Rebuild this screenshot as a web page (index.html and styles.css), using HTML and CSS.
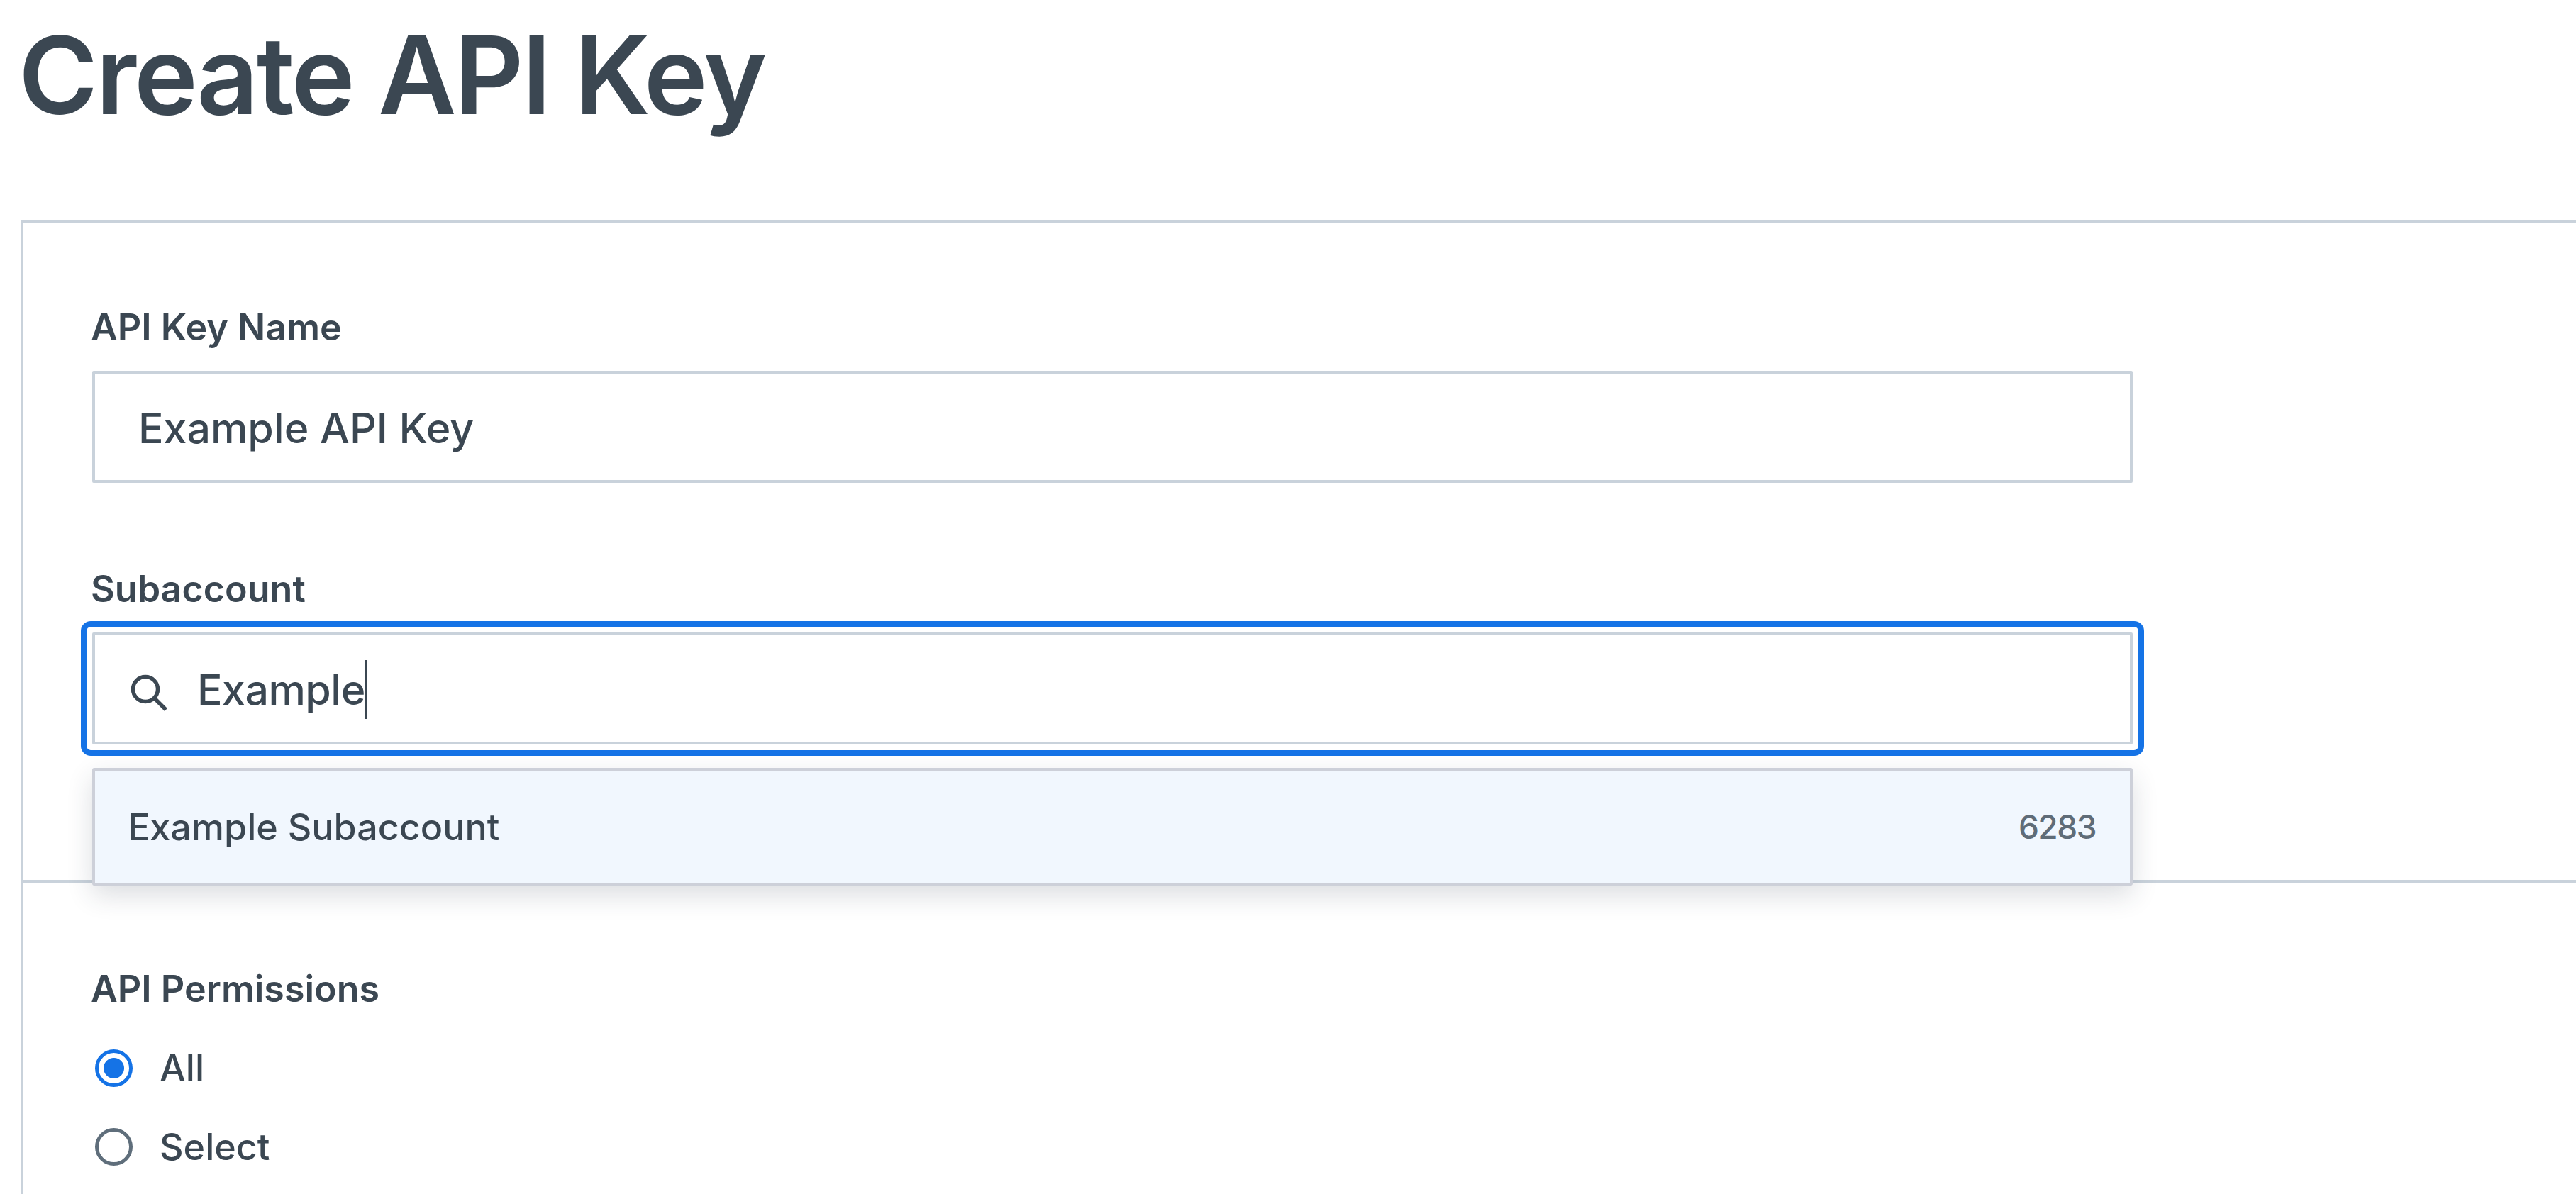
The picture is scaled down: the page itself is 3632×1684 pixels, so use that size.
FILE: index.html
```html
<!DOCTYPE html>
<html lang="en">

<head>
    <meta charset="utf-8">
    <title>Create API Key</title>
    <link rel="stylesheet" href="styles.css">
</head>

<body>
    <h1>Create API Key</h1>

    <div class="card">
        <div class="section section-top">
            <div class="field">
                <div class="field-label">API Key Name</div>
                <div class="text-box plain-box">Example API Key</div>
            </div>

            <div class="field field-search">
                <div class="field-label">Subaccount</div>
                <div class="focus-ring">
                    <div class="text-box search-box">
                        <svg class="search-icon" viewBox="0 0 52 52" width="52" height="52" aria-hidden="true">
                            <circle cx="21" cy="21" r="17.5" fill="none" stroke="#3c4853" stroke-width="5.5" />
                            <path d="M33.5 33.5 L50 50" fill="none" stroke="#3c4853" stroke-width="5.5" />
                        </svg>
                        <span class="search-text">Example</span><span class="caret"></span>
                    </div>
                </div>
                <!-- results list hangs over the divider below -->
                <div class="results">
                    <span>Example Subaccount</span>
                    <span class="result-id">6283</span>
                </div>
            </div>
        </div>

        <div class="section section-permissions">
            <div class="field-label">API Permissions</div>
            <label class="radio-row"><input type="radio" name="permissions" checked> All</label>
            <label class="radio-row"><input type="radio" name="permissions"> Select</label>
        </div>
    </div>
</body>

</html>
```

FILE: styles.css
```css
html,
body {
    height: 100%;
}

body {
    margin: 0;
    padding-left: 29px;
    box-sizing: border-box;
    overflow: hidden;
    background: #fff;
    color: #3b4752;
    font-family: Inter, "Liberation Sans", sans-serif;
}

h1 {
    margin: 0 0 0 -3px;
    height: 310px;
    padding-top: 14px;
    box-sizing: border-box;
    font-size: 152px;
    font-weight: 600;
    letter-spacing: -3px;
    line-height: 184px;
}

.card {
    height: 1374px;
    border-top: 4px solid #c9d2db;
    border-left: 4px solid #c9d2db;
}

.section {
    padding-left: 97px;
}

.section-top {
    height: 931px;
    padding-top: 118px;
    box-sizing: border-box;
    border-bottom: 4px solid #c9d2db;
}

.field {
    width: 2877px;
    margin-bottom: 120px;
}

.field-search {
    position: relative;
}

.field-label {
    height: 60px;
    margin-bottom: 31px;
    margin-left: -2px;
    font-size: 52px;
    font-weight: 600;
    line-height: 60px;
}

.text-box {
    display: flex;
    align-items: center;
    box-sizing: border-box;
    height: 158px;
    padding-top: 3px;
    border: 4px solid #c9d2db;
    border-radius: 2px;
    background: #fff;
    font-size: 59px;
    font-weight: 450;
}

.plain-box {
    padding-left: 61px;
}

.search-box {
    padding-left: 50px;
}

.search-icon {
    flex: none;
    margin-right: 42px;
    margin-top: 8px;
}

.search-text {
    letter-spacing: -0.5px;
}

.caret {
    width: 3px;
    height: 83px;
    background: #3b4752;
}

.focus-ring {
    margin: -16px;
    padding: 8px;
    border: 8px solid #1573e6;
    border-radius: 14px;
}

.results {
    position: absolute;
    top: 100%;
    left: 0;
    right: 0;
    display: flex;
    align-items: center;
    justify-content: space-between;
    box-sizing: border-box;
    height: 166px;
    margin-top: 17px;
    padding: 0 48px 0 46px;
    border: 4px solid #cdd0d9;
    border-radius: 3px;
    background: #f1f7fe;
    box-shadow: 0 14px 36px rgba(40, 50, 70, 0.16);
    font-size: 52px;
    font-weight: 450;
}

.result-id {
    color: #5f6c78;
    font-size: 46px;
    letter-spacing: -1.5px;
}

.section-permissions {
    padding-top: 120px;
}

.section-permissions .field-label {
    margin-bottom: 26px;
}

.radio-row {
    display: flex;
    align-items: center;
    gap: 38px;
    height: 111px;
    margin-left: 4px;
    font-size: 52px;
    font-weight: 450;
}

.radio-row input {
    appearance: none;
    flex: none;
    width: 53px;
    height: 53px;
    margin: 0;
    border: 5px solid #5f6e7b;
    border-radius: 50%;
    background: #fff;
}

.radio-row input:checked {
    border-color: #1573e6;
    background: radial-gradient(circle, #1573e6 14px, #fff 15px);
}
```
